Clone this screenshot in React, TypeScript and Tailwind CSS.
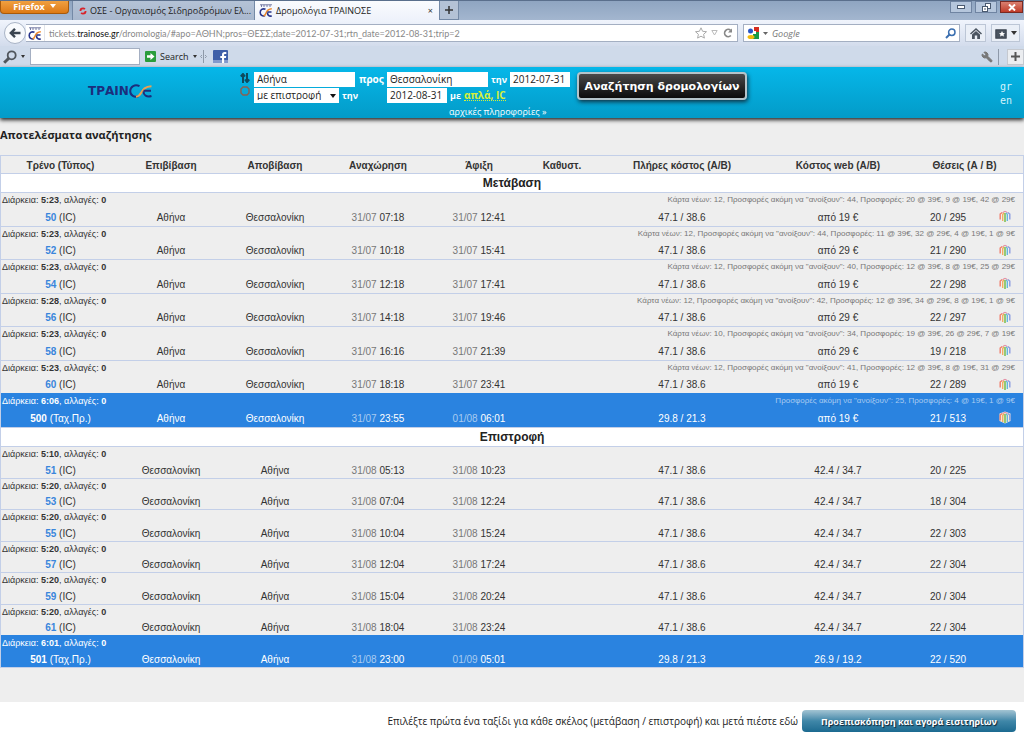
import type { ReactNode } from 'react';
import { Wrench } from 'lucide-react';

interface Trip {
  no: string;
  type: string;
  duration: string;
  dep: [string, string];
  arr: [string, string];
  full: string;
  web: string;
  seats: string;
  offers?: string;
  selected?: boolean;
}

const outbound: Trip[] = [
  { no: '50', type: '(IC)', duration: '5:23', dep: ['31/07', '07:18'], arr: ['31/07', '12:41'], full: '47.1 / 38.6', web: 'από 19 €', seats: '20 / 295', offers: 'Κάρτα νέων: 12, Προσφορές ακόμη να "ανοίξουν": 44, Προσφορές: 20 @ 39€, 9 @ 19€, 42 @ 29€' },
  { no: '52', type: '(IC)', duration: '5:23', dep: ['31/07', '10:18'], arr: ['31/07', '15:41'], full: '47.1 / 38.6', web: 'από 29 €', seats: '21 / 290', offers: 'Κάρτα νέων: 12, Προσφορές ακόμη να "ανοίξουν": 44, Προσφορές: 11 @ 39€, 32 @ 29€, 4 @ 19€, 1 @ 9€' },
  { no: '54', type: '(IC)', duration: '5:23', dep: ['31/07', '12:18'], arr: ['31/07', '17:41'], full: '47.1 / 38.6', web: 'από 19 €', seats: '22 / 298', offers: 'Κάρτα νέων: 12, Προσφορές ακόμη να "ανοίξουν": 40, Προσφορές: 12 @ 39€, 8 @ 19€, 25 @ 29€' },
  { no: '56', type: '(IC)', duration: '5:28', dep: ['31/07', '14:18'], arr: ['31/07', '19:46'], full: '47.1 / 38.6', web: 'από 29 €', seats: '22 / 297', offers: 'Κάρτα νέων: 12, Προσφορές ακόμη να "ανοίξουν": 42, Προσφορές: 12 @ 39€, 34 @ 29€, 8 @ 19€, 1 @ 9€' },
  { no: '58', type: '(IC)', duration: '5:23', dep: ['31/07', '16:16'], arr: ['31/07', '21:39'], full: '47.1 / 38.6', web: 'από 29 €', seats: '19 / 218', offers: 'Κάρτα νέων: 10, Προσφορές ακόμη να "ανοίξουν": 34, Προσφορές: 19 @ 39€, 26 @ 29€, 7 @ 19€' },
  { no: '60', type: '(IC)', duration: '5:23', dep: ['31/07', '18:18'], arr: ['31/07', '23:41'], full: '47.1 / 38.6', web: 'από 19 €', seats: '22 / 289', offers: 'Κάρτα νέων: 12, Προσφορές ακόμη να "ανοίξουν": 41, Προσφορές: 12 @ 39€, 8 @ 19€, 31 @ 29€' },
  { no: '500', type: '(Ταχ.Πρ.)', duration: '6:06', dep: ['31/07', '23:55'], arr: ['01/08', '06:01'], full: '29.8 / 21.3', web: 'από 19 €', seats: '21 / 513', offers: 'Προσφορές ακόμη να "ανοίξουν": 25, Προσφορές: 4 @ 19€, 1 @ 9€', selected: true },
];

const inbound: Trip[] = [
  { no: '51', type: '(IC)', duration: '5:10', dep: ['31/08', '05:13'], arr: ['31/08', '10:23'], full: '47.1 / 38.6', web: '42.4 / 34.7', seats: '20 / 225' },
  { no: '53', type: '(IC)', duration: '5:20', dep: ['31/08', '07:04'], arr: ['31/08', '12:24'], full: '47.1 / 38.6', web: '42.4 / 34.7', seats: '18 / 304' },
  { no: '55', type: '(IC)', duration: '5:20', dep: ['31/08', '10:04'], arr: ['31/08', '15:24'], full: '47.1 / 38.6', web: '42.4 / 34.7', seats: '22 / 303' },
  { no: '57', type: '(IC)', duration: '5:20', dep: ['31/08', '12:04'], arr: ['31/08', '17:24'], full: '47.1 / 38.6', web: '42.4 / 34.7', seats: '22 / 304' },
  { no: '59', type: '(IC)', duration: '5:20', dep: ['31/08', '15:04'], arr: ['31/08', '20:24'], full: '47.1 / 38.6', web: '42.4 / 34.7', seats: '20 / 304' },
  { no: '61', type: '(IC)', duration: '5:20', dep: ['31/08', '18:04'], arr: ['31/08', '23:24'], full: '47.1 / 38.6', web: '42.4 / 34.7', seats: '22 / 304' },
  { no: '501', type: '(Ταχ.Πρ.)', duration: '6:01', dep: ['31/08', '23:00'], arr: ['01/09', '05:01'], full: '29.8 / 21.3', web: '26.9 / 19.2', seats: '22 / 520', selected: true },
];

const OseFavicon = () => (
  <svg viewBox="0 0 14 13" className="h-[13px] w-[14px] shrink-0" fill="none">
    <path d="M1 .8h12M2.500 .8v2.200M5 .8v2.200M8 .8v2.200M11 .8v2.200" stroke="#6a6f9c" strokeWidth=".9" />
    <path d="M6.500 5.200C3.500 4 1.200 6 1.200 8.500s2.300 4.200 4.800 3" stroke="#27348b" strokeWidth="1.600" />
    <path d="M4.500 11.800C8.500 11 5.500 5.200 12.800 4.700" stroke="#f08a2c" strokeWidth="1.600" />
    <path d="M12.500 8H8.500M12.800 12c-3 .6-4.300-1-4.300-3.500" stroke="#27348b" strokeWidth="1.600" />
  </svg>
);

const GiftIcon = ({ selected }: { selected?: boolean }) => (
  <svg viewBox="0 0 12 13" className="mx-auto block h-[13px] w-3" fill="none">
    {selected && <path d="M6 .5l5.500 2v7.500L6 12.500.500 10V2.500z" fill="#f3e9d8" />}
    <path d="M1.200 9.500V4l2-1.500" stroke="#ef7d6b" strokeWidth="1.400" />
    <path d="M3.700 11V4.500l1.500-2" stroke="#f2ab5a" strokeWidth="1.300" />
    <path d="M6 12V3" stroke="#8cc665" strokeWidth="1.800" />
    <path d="M8.300 11V4.500L7 2.500" stroke="#5cb5dd" strokeWidth="1.300" />
    <path d="M10.800 9.500V4l-2-1.500" stroke="#8b9be0" strokeWidth="1.400" />
    <path d="M3.500 2.500L6 1.200l2.500 1.300" stroke="#e58fa5" strokeWidth="1" />
  </svg>
);

const Browser = () => (
  <div className="font-['Open_Sans','Noto_Sans',sans-serif] text-[9px] leading-none text-[#222]">
    <div className="flex h-5 items-stretch border-t border-[#5a6f8c] bg-linear-to-b from-[#8fa5c1] to-[#a3b6cf]">
      <button className="mr-[3px] flex h-[13px] w-[69px] items-center justify-center gap-[5px] rounded-b-sm border border-t-0 border-[#a85a0a] bg-linear-to-b from-[#f0a040] to-[#dd7a12] pb-[2px] font-bold text-white">
        Firefox
        <svg viewBox="0 0 6 4" className="h-[4px] w-[6px]"><path d="M0 0h6L3 4z" fill="#fff" /></svg>
      </button>
      <div className="flex w-[183px] items-center gap-[3px] border-x border-[#7489a6] bg-linear-to-b from-[#b4c2d6] to-[#a9b8ce] pr-[3px] pl-[6px]">
        <svg viewBox="0 0 8 8" className="size-2 shrink-0">
          <circle cx="4" cy="4" r="2.600" fill="none" stroke="#d8232a" strokeWidth="1.800" strokeDasharray="6 2" />
        </svg>
        <span className="flex-1 leading-4 whitespace-nowrap">ΟΣΕ - Οργανισμός Σιδηροδρόμων Ελ...</span>
        <button aria-label="Κλείσιμο καρτέλας" className="text-[#7d8796]">×</button>
      </div>
      <div className="flex w-[184px] items-center gap-[3px] bg-linear-to-b from-[#fafbfe] to-[#eef2fb] pr-[6px] pl-1">
        <OseFavicon />
        <span className="flex-1 leading-4 whitespace-nowrap">Δρομολόγια ΤΡΑΙΝΟΣΕ</span>
        <button aria-label="Κλείσιμο καρτέλας" className="text-[#333]">×</button>
      </div>
      <button aria-label="Νέα καρτέλα" className="flex w-5 items-center justify-center border-x border-b border-[#7489a6] bg-[#b4c2d6]">
        <svg viewBox="0 0 8 8" className="size-2"><path d="M4 0v8M0 4h8" stroke="#333" strokeWidth="1.500" /></svg>
      </button>
      <div className="ml-auto flex items-start gap-[3px] pr-px">
        <button aria-label="Ελαχιστοποίηση" className="flex h-3 w-[22px] items-center justify-center border border-[#6f84a2] bg-[#b5c6dc]">
          <svg viewBox="0 0 8 4" className="h-1 w-2"><rect x=".5" y=".5" width="7" height="3" fill="#fff" stroke="#4a5a70" /></svg>
        </button>
        <button aria-label="Επαναφορά" className="flex h-3 w-[22px] items-center justify-center border border-[#6f84a2] bg-[#b5c6dc]">
          <svg viewBox="0 0 9 9" className="size-[9px]" fill="#fff" stroke="#4a5a70"><rect x="3.500" y=".5" width="5" height="5" /><rect x=".5" y="3.500" width="5" height="5" /><path d="M2 6h2" /></svg>
        </button>
        <button aria-label="Κλείσιμο" className="flex h-3 w-[23px] items-center justify-center border border-[#7a2a22] bg-linear-to-b from-[#d98070] to-[#bf3a28]">
          <svg viewBox="0 0 8 7" className="h-[7px] w-2"><path d="M1 .5l6 6M7 .5l-6 6" stroke="#fff" strokeWidth="2" /></svg>
        </button>
      </div>
    </div>

    <div className="flex h-[26px] items-center bg-linear-to-b from-[#f0f4fc] to-[#d3dcec] pr-1">
      <button aria-label="Πίσω" className="ml-1 flex size-[22px] shrink-0 items-center justify-center rounded-full border border-[#a9b4c6] bg-[#f8fafd]">
        <svg viewBox="0 0 12 10" className="h-[10px] w-3" fill="none" stroke="#3a4450" strokeWidth="2.400"><path d="M6 .8L1.800 5 6 9.200M2 5h9.500" /></svg>
      </button>
      <div className="flex h-[18px] flex-1 items-center gap-1 border border-l-0 border-[#a4afc2] bg-white pr-1">
        <div className="flex h-full w-[19px] items-center justify-center border-r border-[#e2e5ea]"><OseFavicon /></div>
        <div className="flex-1 font-['Lato','Open_Sans',sans-serif] text-[#888]">
          tickets.<span className="text-[#111]">trainose.gr</span>/dromologia/#apo=ΑΘΗΝ;pros=ΘΕΣΣ;date=2012-07-31;rtn_date=2012-08-31;trip=2
        </div>
        <svg viewBox="0 0 12 12" className="size-3" fill="#fff" stroke="#aaa"><path d="M6 .8l1.600 3.500 3.900.4-2.900 2.600.8 3.800L6 9.200l-3.400 1.900.8-3.800L.500 4.700l3.900-.4z" /></svg>
        <svg viewBox="0 0 7 6" className="h-[6px] w-[7px]" fill="#fff" stroke="#bbb"><path d="M.8.500h5.400L3.500 5z" /></svg>
        <svg viewBox="0 0 10 10" className="ml-px size-[10px]" fill="none" stroke="#888" strokeWidth="1.700"><path d="M7.800 7.500A3.600 3.600 0 1 1 7.600 2.300" /><path d="M9 .5v4H5z" fill="#888" stroke="none" /></svg>
      </div>
      <div className="ml-[5px] flex h-[18px] w-[217px] items-center gap-1 border border-[#a4afc2] bg-white px-[3px]">
        <svg viewBox="0 0 12 12" className="size-3 shrink-0">
          <path d="M0 0h12v12H0z" fill="#fff" /><path d="M7 0h5v6H7z" fill="#d62d20" /><path d="M6 5h6v7H6z" fill="#1a9848" />
          <circle cx="3.500" cy="4" r="2.500" fill="#2a56c6" /><ellipse cx="4" cy="10" rx="3.500" ry="2" fill="#f2b90c" /><path d="M6 4h3v3H6z" fill="#fff" />
        </svg>
        <svg viewBox="0 0 5 3" className="h-[3px] w-[5px]"><path d="M0 0h5L2.500 3z" fill="#666" /></svg>
        <input aria-label="Google" placeholder="Google" className="min-w-0 flex-1 italic outline-none placeholder:text-[#777]" />
        <svg viewBox="0 0 11 11" className="size-[11px]" fill="none" stroke="#3b6fb0" strokeWidth="1.500"><circle cx="6.800" cy="4.200" r="3.200" /><path d="M4.500 6.500L1 10" strokeWidth="2" /></svg>
      </div>
      <button aria-label="Αρχική" className="ml-[5px] flex h-[18px] w-[21px] items-center justify-center border border-[#bcc6d6] bg-[#eaeff7]">
        <svg viewBox="0 0 12 11" className="h-[11px] w-3" fill="#4b5561"><path d="M6 0l6 5.500-1 1L6 2 1 6.500l-1-1zM2 6.500L6 3l4 3.500V11H7.200V7.500H4.800V11H2z" /></svg>
      </button>
      <button aria-label="Σελιδοδείκτες" className="ml-[5px] flex h-[18px] w-[29px] items-center justify-center gap-1 border border-[#bcc6d6] bg-[#eaeff7]">
        <svg viewBox="0 0 12 11" className="h-[11px] w-3"><rect x=".8" y="1.800" width="10.400" height="8.400" fill="#4b5561" stroke="#39424d" /><path d="M7 3l1 2 2 .2-1.500 1.400.4 2L7 7.600 5.100 8.600l.4-2L4 5.200 6 5z" fill="#fff" /></svg>
        <svg viewBox="0 0 6 4" className="h-1 w-[6px]"><path d="M0 0h6L3 4z" fill="#333" /></svg>
      </button>
    </div>

    <div className="flex h-[21px] items-center bg-[#cfdaea] pl-[3px]">
      <svg viewBox="0 0 14 14" className="size-[14px]" fill="none" stroke="#50565c"><circle cx="8.700" cy="5.300" r="4" strokeWidth="1.800" /><path d="M6 8L1.200 12.800" strokeWidth="3" /></svg>
      <svg viewBox="0 0 4 3" className="mx-1 h-[3px] w-1"><path d="M0 0h4L2 3z" fill="#333" /></svg>
      <input aria-label="Αναζήτηση" className="ml-px h-[17px] w-[110px] border border-[#a4afc2] bg-white px-1" />
      <svg viewBox="0 0 11 11" className="ml-[5px] size-[11px]"><rect width="11" height="11" rx="1" fill="#2a9d3c" /><path d="M2 4.300h3.500V2L9.500 5.500l-4 3.500V6.700H2z" fill="#fff" /></svg>
      <button className="ml-1">Search</button>
      <svg viewBox="0 0 4 3" className="ml-1 h-[3px] w-1"><path d="M0 0h4L2 3z" fill="#333" /></svg>
      <svg viewBox="0 0 7 13" className="ml-[3px] h-[13px] w-[7px]" stroke="#8e99a9" fill="none"><path d="M3.500 0v13M2 5L.5 6.500 2 8M5 5l1.500 1.500L5 8" /></svg>
      <svg viewBox="0 0 15 13" className="ml-[6px] h-[13px] w-[15px]">
        <rect width="15" height="13" rx="1" fill="#3f5fa8" /><path d="M0 10h15v3H0z" fill="#8299cc" />
        <path d="M9 13V8H7.300V6H9V4.500C9 2.800 10 1.900 11.500 1.900h1.800v2H12c-.7 0-.9.300-.9.900V6h2.100l-.3 2h-1.800v5z" fill="#fff" />
      </svg>
      {/* the wrench head points up and left in this toolbar */}
      <Wrench size={12} className="ml-auto -scale-x-100 fill-[#777] text-[#777]" />
      <span className="mx-[5px] h-4 w-px bg-[#8e99a9]" />
      <button aria-label="Προσθήκη" className="ml-[3px] flex h-4 w-[17px] items-center justify-center border border-[#c5c9d0] bg-[#ebedf0]">
        <svg viewBox="0 0 9 9" className="size-[9px]"><path d="M4.500 0v9M0 4.500h9" stroke="#555" strokeWidth="2" /></svg>
      </button>
    </div>
  </div>
);

const fieldClass = 'h-[15px] bg-white px-[3px] text-[10px] font-normal text-[#222] outline-none';

const SearchHeader = () => (
  <header className="relative flex h-[51px] items-start bg-linear-to-b from-[#06b7e9] to-[#039bc8] font-['Open_Sans','Noto_Sans',sans-serif] leading-none shadow-[0_2px_4px_#222]">
    <a href="#" aria-label="ΤΡΑΙΝΟΣΕ" className="mt-[17px] ml-[88px] flex w-[152px] items-center text-[#1c2e7c]">
      <span className="font-['DejaVu_Sans',sans-serif] text-[12px] font-bold">ΤΡΑΙΝ</span>
      <svg viewBox="0 0 24 14" className="h-[14px] w-6" fill="none" strokeWidth="2">
        <path d="M10.500 2.200C6-.2 1.200 2.500 1.200 7s4.300 7 8.300 5" stroke="#1c2e7c" />
        <path d="M7 12.800c7.500-.8 3.500-10 15.500-10.600" stroke="#e9a254" />
        <path d="M22 6.700h-7.500M22.500 12c-5 1.500-8-.8-8-4.500" stroke="#1c2e7c" />
      </svg>
    </a>
    <form className="flex items-start pt-1" onSubmit={(e) => e.preventDefault()}>
      <div className="flex w-[14px] flex-col gap-[3px] pt-[2px]">
        <svg viewBox="0 0 10 10" className="size-[10px]" stroke="#0d4a5e" strokeWidth="2" fill="none"><path d="M3 10V1M.8 3.500L3 1l2 2.500M7 0v9M5 6.500L7 9l2.200-2.500" /></svg>
        <svg viewBox="0 0 10 10" className="size-[10px]" fill="none" stroke="#8a5f50" strokeWidth="1.400"><path d="M3 1h4l2 2v4L7 9H3L1 7V3z" /></svg>
      </div>
      <div className="text-[10px] font-bold text-white">
        <div className="flex h-4 items-center">
          <div className="flex w-[133px] items-center gap-1">
            <input aria-label="Από" defaultValue="Αθήνα" className={`${fieldClass} w-[101px]`} />
            <label htmlFor="dest">προς</label>
          </div>
          <input id="dest" defaultValue="Θεσσαλονίκη" className={`${fieldClass} w-[101px]`} />
          <label htmlFor="out" className="w-[22px] pl-[3px] text-[9px]">την</label>
          <input id="out" defaultValue="2012-07-31" className={`${fieldClass} w-[60px]`} />
        </div>
        <div className="flex h-4 items-center">
          <div className="flex w-[133px] items-center gap-[3px]">
            <span className="relative">
              <select aria-label="Τύπος ταξιδιού" className={`${fieldClass} block w-[85px] appearance-none`}>
                <option>με επιστροφή</option>
              </select>
              <svg viewBox="0 0 6 4" className="pointer-events-none absolute top-[6px] right-[3px] h-1 w-[6px]"><path d="M0 0h6L3 4z" fill="#111" /></svg>
            </span>
            <label htmlFor="ret" className="text-[9px]">την</label>
          </div>
          <input id="ret" defaultValue="2012-08-31" className={`${fieldClass} w-[60px]`} />
          <span className="pl-[3px] text-[9px]">με</span>
          <a href="#" className="ml-[3px] border-b border-dotted border-[#d6f03a] text-[#d6f03a]">απλά, IC</a>
        </div>
        <div className="pt-1 pl-[195px] text-[9px] font-normal">
          <a href="#">αρχικές πληροφορίες »</a>
        </div>
      </div>
      <button className="mt-px ml-[7px] h-7 w-[170px] rounded border-2 border-[#b5c4ca] bg-linear-to-b from-[#4a4a4a] to-[#0c0c0c] font-['DejaVu_Sans',sans-serif] text-[11px] font-bold text-white shadow-[1px_2px_4px_#134]">
        Αναζήτηση δρομολογίων
      </button>
    </form>
    <nav className="mt-[13px] mr-3 ml-auto flex flex-col font-['DejaVu_Sans_Mono',monospace] text-[10px] leading-[14px] text-[#d5f3fb]">
      <a href="#">gr</a>
      <a href="#">en</a>
    </nav>
  </header>
);

const When = ({ at, selected }: { at: [string, string]; selected?: boolean }) => (
  <>
    <span className={selected ? 'text-[#a9cbf0]' : 'text-[#777]'}>{at[0]}</span> {at[1]}
  </>
);

interface LegProps {
  title: ReactNode;
  from: string;
  to: string;
  trips: Trip[];
  tall?: boolean;
}

const cell = 'p-0 pt-[2px]';

// each trip takes two table rows: the summary line and the details below it
const Leg = ({ title, from, to, trips, tall }: LegProps) => (
  <tbody>
    <tr className="h-[19px] bg-white">
      <th colSpan={10} className="border-t border-[#c3cfe8] p-0 text-[12px] text-[#222]">{title}</th>
    </tr>
    {trips.map((t, i) => {
      const tone = t.selected ? 'bg-[#2a83e0] text-white' : 'text-[#333]';
      const line = t.selected ? 'border-[#2a83e0]' : 'border-[#c3cfe8]';
      const detail = tall ? (i % 2 ? 'h-[18px]' : 'h-[19px]') : i % 2 ? 'h-4' : 'h-[17px]';
      return [
        <tr key={`${t.no}-info`} className={`h-[15px] text-[9px] ${tone}`}>
          <td colSpan={3} className={`border-t p-0 pl-px text-left ${line}`}>
            Διάρκεια: <b>{t.duration}</b>, αλλαγές: <b>0</b>
          </td>
          <td colSpan={7} className={`border-t p-0 pr-2 text-right text-[8px] ${line} ${t.selected ? 'text-[#a9cbf0]' : 'text-[#777]'}`}>
            {t.offers}
          </td>
        </tr>,
        <tr key={t.no} className={`${detail} ${tone}`}>
          <td className={cell}>
            <a href="#" className={t.selected ? 'font-bold' : 'font-bold text-[#3a86dc]'}>{t.no}</a> {t.type}
          </td>
          <td className={cell}>{from}</td>
          <td className={cell}>{to}</td>
          <td className={cell}><When at={t.dep} selected={t.selected} /></td>
          <td className={cell}><When at={t.arr} selected={t.selected} /></td>
          <td className={cell} />
          <td className={cell}>{t.full}</td>
          <td className={cell}>{t.web}</td>
          <td className={cell}>{t.seats}</td>
          <td className="p-0 pr-1">{t.offers && <GiftIcon selected={t.selected} />}</td>
        </tr>,
      ];
    })}
  </tbody>
);

export default function App() {
  return (
    <div className="min-h-screen bg-white">
      <Browser />
      <SearchHeader />
      <main className="bg-[#eee] pt-[11px] pb-[34px]">
        <h1 className="h-[26px] font-['Open_Sans','Noto_Sans',sans-serif] text-[11px] leading-3 font-bold text-[#222]">
          Αποτελέσματα αναζήτησης
        </h1>
        <table className="w-full table-fixed border-separate border-spacing-0 border border-[#c3cfe8] text-center font-['Liberation_Sans',Arial,sans-serif] text-[10px] leading-3">
          <colgroup>
            <col className="w-[119px]" />
            <col className="w-[102px]" />
            <col className="w-[106px]" />
            <col className="w-[100px]" />
            <col className="w-[102px]" />
            <col className="w-[64px]" />
            <col className="w-[176px]" />
            <col className="w-[136px]" />
            <col className="w-[84px]" />
            <col className="w-[33px]" />
          </colgroup>
          <thead>
            <tr className="h-[17px] text-[#333]">
              <th className={cell}>Τρένο (Τύπος)</th>
              <th className={cell}>Επιβίβαση</th>
              <th className={cell}>Αποβίβαση</th>
              <th className={cell}>Αναχώρηση</th>
              <th className={cell}>Άφιξη</th>
              <th className={cell}>Καθυστ.</th>
              <th className={cell}>Πλήρες κόστος (Α/Β)</th>
              <th className={cell}>Κόστος web (Α/Β)</th>
              <th colSpan={2} className={cell}>Θέσεις (Α / Β)</th>
            </tr>
          </thead>
          <Leg title="Μετάβαση" from="Αθήνα" to="Θεσσαλονίκη" trips={outbound} tall />
          <Leg title="Επιστροφή" from="Θεσσαλονίκη" to="Αθήνα" trips={inbound} />
        </table>
      </main>
      <footer className="flex items-center justify-end gap-1 py-2 pr-2 font-['Open_Sans','Noto_Sans',sans-serif] text-[10px] leading-none text-[#222]">
        <p>Επιλέξτε πρώτα ένα ταξίδι για κάθε σκέλος (μετάβαση / επιστροφή) και μετά πιέστε εδώ</p>
        <button className="h-[22px] w-[214px] rounded-sm bg-linear-to-b from-[#a3c4d3] via-[#3f87a8] to-[#1b6a90] text-[9px] font-bold text-white text-shadow-[1px_1px_1px_#123]">
          Προεπισκόπηση και αγορά εισιτηρίων
        </button>
      </footer>
    </div>
  );
}
